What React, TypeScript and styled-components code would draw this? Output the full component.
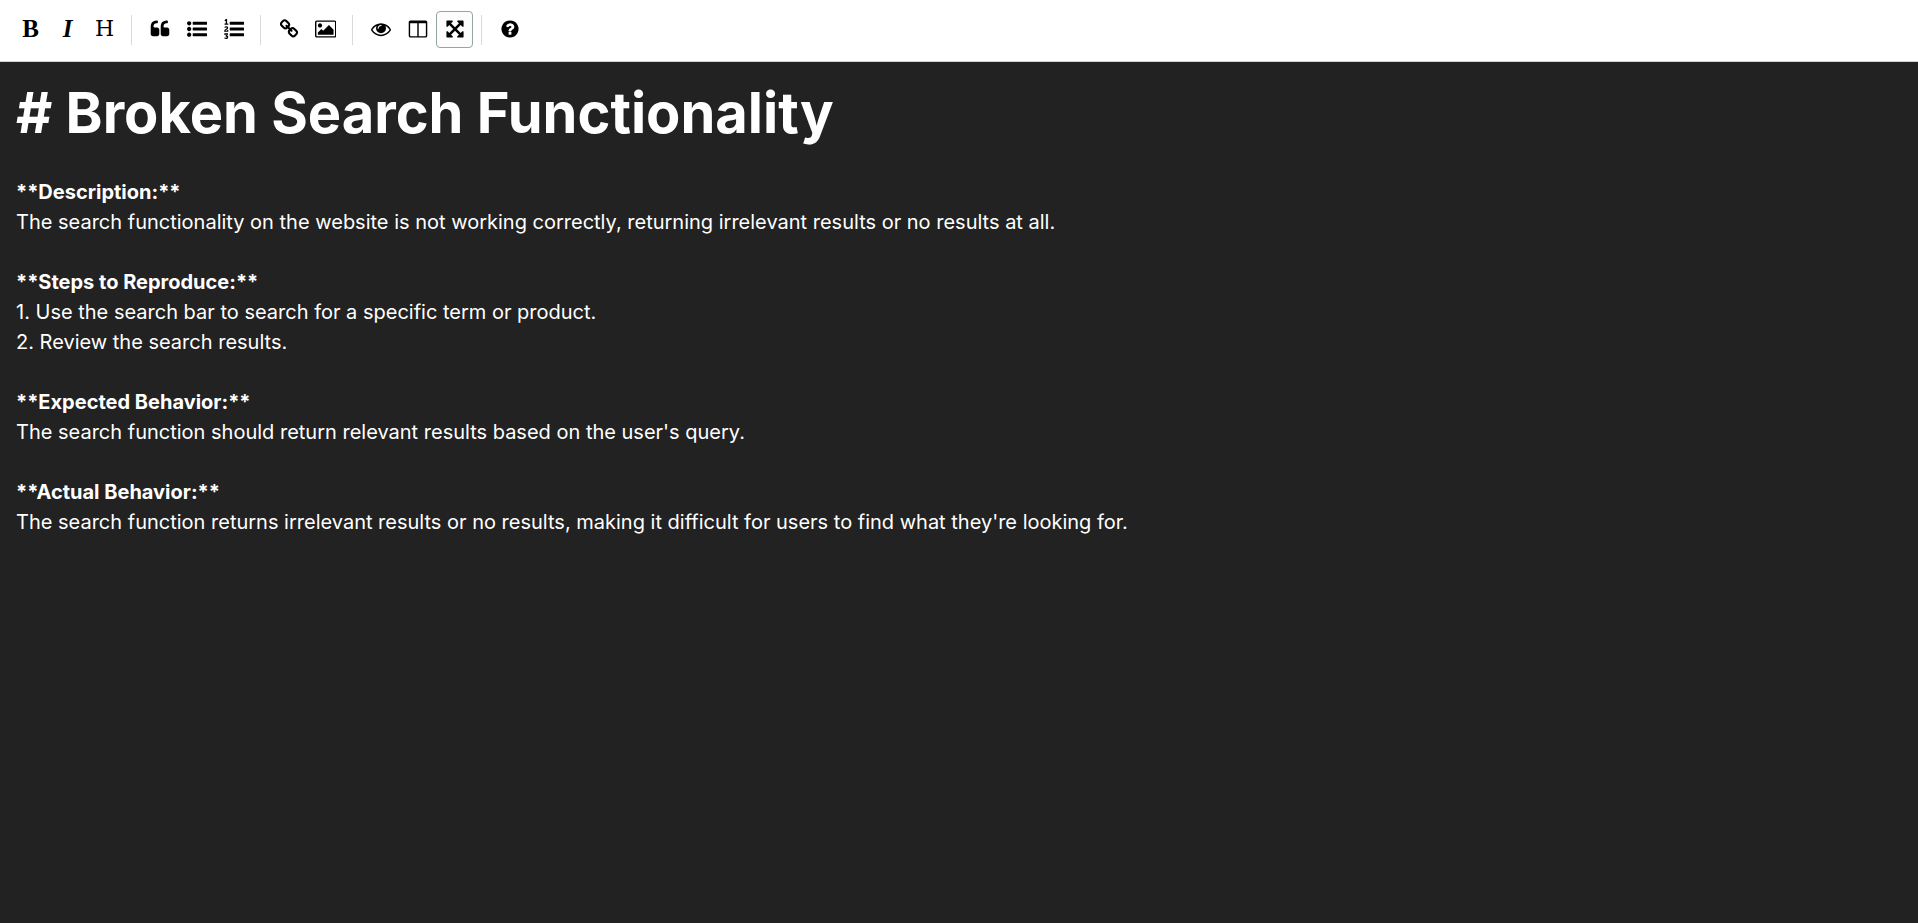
import React from "react";
import styled, { createGlobalStyle } from "styled-components";

const GlobalStyle = createGlobalStyle`
  * { box-sizing: border-box; }
  body { margin: 0; background: #222222; }
`;

const Page = styled.div`
  display: flex;
  flex-direction: column;
  min-height: 100vh;
  font-family: Inter, "Liberation Sans", sans-serif;
`;

const Toolbar = styled.div`
  display: flex;
  flex-wrap: wrap;
  align-items: center;
  padding: 11px 12px 13px;
  background: #ffffff;
  border-bottom: 1px solid #ced4da;
`;

const ToolButton = styled.button<{ $active?: boolean }>`
  display: flex;
  align-items: center;
  justify-content: center;
  width: 37px;
  height: 37px;
  padding: 0 0 2px;
  color: #000000;
  background: ${(p) => (p.$active ? "#fcfcfc" : "transparent")};
  border: 1px solid ${(p) => (p.$active ? "#95a5a6" : "transparent")};
  border-radius: 4px;
  cursor: pointer;

  &:hover {
    background: #fcfcfc;
    border-color: #95a5a6;
  }
`;

const Letter = styled.span<{ $family?: string; $size?: number; $weight?: number; $italic?: boolean }>`
  font-family: ${(p) => p.$family ?? "Liberation Serif"}, serif;
  font-size: ${(p) => p.$size ?? 25}px;
  line-height: 28px;
  font-weight: ${(p) => p.$weight ?? 400};
  font-style: ${(p) => (p.$italic ? "italic" : "normal")};
`;

const Separator = styled.span`
  width: 1px;
  height: 30px;
  margin: 0 9px 0 8px;
  background: #d9d9d9;
`;

const Icon = styled.svg`
  height: 20px;
  fill: currentColor;
`;

const Editor = styled.div`
  flex: 1;
  padding: 17px 16px;
  color: #ffffff;
  background: #222222;
  font-size: 20px;
  line-height: 30px;
  white-space: pre-wrap;
  outline: none;
`;

const Heading = styled.h1`
  margin: 0;
  font-size: 56px;
  line-height: 68px;
  font-weight: 700;
`;

const Line = styled.div`
  min-height: 30px;
`;

const Strong = styled.strong`
  font-weight: 700;
`;

const bars =
  "M1792 1312v192q0 13-9.5 22.5t-22.5 9.5h-1216q-13 0-22.5-9.5t-9.5-22.5v-192q0-13 9.5-22.5t22.5-9.5h1216q13 0 22.5 9.5t9.5 22.5zM1792 800v192q0 13-9.5 22.5t-22.5 9.5h-1216q-13 0-22.5-9.5t-9.5-22.5v-192q0-13 9.5-22.5t22.5-9.5h1216q13 0 22.5 9.5t9.5 22.5zM1792 288v192q0 13-9.5 22.5t-22.5 9.5h-1216q-13 0-22.5-9.5t-9.5-22.5v-192q0-13 9.5-22.5t22.5-9.5h1216q13 0 22.5 9.5t9.5 22.5z";

const icons = {
  quote:
    "M832 960v384q0 80-56 136t-136 56h-384q-80 0-136-56t-56-136v-704q0-104 40.5-198.5t109.5-163.5 163.5-109.5 198.5-40.5h64q26 0 45 19t19 45v128q0 26-19 45t-45 19h-64q-106 0-181 75t-75 181v32q0 40 28 68t68 28h224q80 0 136 56t56 136zm896 0v384q0 80-56 136t-136 56h-384q-80 0-136-56t-56-136v-704q0-104 40.5-198.5t109.5-163.5 163.5-109.5 198.5-40.5h64q26 0 45 19t19 45v128q0 26-19 45t-45 19h-64q-106 0-181 75t-75 181v32q0 40 28 68t68 28h224q80 0 136 56t56 136z",
  bullets:
    "M384 1408q0 80-56 136t-136 56-136-56-56-136 56-136 136-56 136 56 56 136zm0-512q0 80-56 136t-136 56-136-56-56-136 56-136 136-56 136 56 56 136zm0-512q0 80-56 136t-136 56-136-56-56-136 56-136 136-56 136 56 56 136z" +
    bars,
  numbers:
    "M381 1620q0 80-54.5 126t-135.5 46q-106 0-172-66l57-88q49 45 106 45 29 0 50.5-14.5t21.5-42.5q0-64-105-56l-26-56q8-10 32.5-43.5t42.5-54 37-38.5v-1q-16 0-48.5 1t-48.5 1v53h-106v-152h333v88l-95 115q51 12 81 49t30 88zm2-627v159h-362q-6-36-6-54 0-51 23.5-93t56.5-68 66-47.5 56.5-43.5 23.5-45q0-25-14.5-38.5t-39.5-13.5q-46 0-81 58l-85-59q24-51 71.5-79.5t105.5-28.5q73 0 123 41.5t50 112.5q0 50-34 91.5t-75 64.5-75.5 50.5-35.5 52.5h127v-60h105zM384 413v99h-335v-99h107q0-41 .5-121.5t.5-121.5v-12h-2q-8 17-50 54l-71-76 136-127h106v404h108z" +
    bars,
  link: "M1520 1216q0-40-28-68l-208-208q-28-28-68-28-42 0-72 32 3 3 19 18.5t21.5 21.5 15 19 13 25.5 3.5 27.5q0 40-28 68t-68 28q-15 0-27.5-3.5t-25.5-13-19-15-21.5-21.5-18.5-19q-33 31-33 73 0 40 28 68l206 207q27 27 68 27 40 0 68-26l147-146q28-28 28-67zm-703-705q0-40-28-68l-206-207q-28-28-68-28-39 0-68 27l-147 146q-28 28-28 67 0 40 28 68l208 208q27 27 68 27 42 0 72-31-3-3-19-18.5t-21.5-21.5-15-19-13-25.5-3.5-27.5q0-40 28-68t68-28q15 0 27.5 3.5t25.5 13 19 15 21.5 21.5 18.5 19q33-31 33-73zm895 705q0 120-85 203l-147 146q-83 83-203 83-121 0-204-85l-206-207q-83-83-83-203 0-123 88-209l-88-88q-86 88-208 88-120 0-204-84l-208-208q-84-84-84-204t85-203l147-146q83-83 203-83 121 0 204 85l206 207q83 83 83 203 0 123-88 209l88 88q86-88 208-88 120 0 204 84l208 208q84 84 84 204z",
  image:
    "M576 576q0 80-56 136t-136 56-136-56-56-136 56-136 136-56 136 56 56 136zm1024 384v448h-1408v-192l320-320 160 160 512-512zm96-704h-1600q-13 0-22.5 9.5t-9.5 22.5v1216q0 13 9.5 22.5t22.5 9.5h1600q13 0 22.5-9.5t9.5-22.5v-1216q0-13-9.5-22.5t-22.5-9.5zm160 32v1216q0 66-47 113t-113 47h-1600q-66 0-113-47t-47-113v-1216q0-66 47-113t113-47h1600q66 0 113 47t47 113z",
  eye: "M1664 960q-152-236-381-353 61 104 61 225 0 185-131.5 316.5t-316.5 131.5-316.5-131.5-131.5-316.5q0-121 61-225-229 117-381 353 133 205 333.5 326.5t434.5 121.5 434.5-121.5 333.5-326.5zm-720-384q0-20-14-34t-34-14q-125 0-214.5 89.5t-89.5 214.5q0 20 14 34t34 14 34-14 14-34q0-86 61-147t147-61q20 0 34-14t14-34zm848 384q0 34-20 69-140 230-376.5 368.5t-499.5 138.5-499.5-139-376.5-368q-20-35-20-69t20-69q140-229 376.5-368t499.5-139 499.5 139 376.5 368q20 35 20 69z",
  columns:
    "M224 1536h608v-1152h-640v1120q0 13 9.5 22.5t22.5 9.5zm1376-32v-1120h-640v1152h608q13 0 22.5-9.5t9.5-22.5zm128-1216v1216q0 66-47 113t-113 47h-1344q-66 0-113-47t-47-113v-1216q0-66 47-113t113-47h1344q66 0 113 47t47 113z",
  arrows:
    "M1411 541l-355 355 355 355 144-144q29-31 70-14 39 17 39 59v448q0 26-19 45t-45 19h-448q-42 0-59-40-17-39 14-69l144-144-355-355-355 355 144 144q31 30 14 69-17 40-59 40h-448q-26 0-45-19t-19-45v-448q0-42 40-59 39-17 69 14l144 144 355-355-355-355-144 144q-19 19-45 19-12 0-24-5-40-17-40-59v-448q0-26 19-45t45-19h448q42 0 59 40 17 39-14 69l-144 144 355 355 355-355-144-144q-31-30-14-69 17-40 59-40h448q26 0 45 19t19 45v448q0 42-39 59-13 5-25 5-26 0-45-19z",
  help: "M1024 1376v-192q0-14-9-23t-23-9h-192q-14 0-23 9t-9 23v192q0 14 9 23t23 9h192q14 0 23-9t9-23zm256-672q0-88-55.5-163t-138.5-116-170-41q-243 0-371 213-15 24 8 42l132 100q7 6 19 6 16 0 25-12 53-68 86-92 34-24 86-24 48 0 85.5 26t37.5 59q0 38-20 61t-68 45q-63 28-115.5 86.5t-52.5 125.5v36q0 14 9 23t23 9h192q14 0 23-9t9-23q0-19 21.5-49.5t54.5-49.5q32-18 49-28.5t46-35 44.5-48 28-60.5 12.5-81zm384 192q0 209-103 385.5t-279.5 279.5-385.5 103-385.5-103-279.5-279.5-103-385.5 103-385.5 279.5-279.5 385.5-103 385.5 103 279.5 279.5 103 385.5z",
};

type IconName = keyof typeof icons;

function IconButton({ name, label, active }: { name: IconName; label: string; active?: boolean }) {
  // The picture glyph is wider than the square the others share.
  const viewBox = name === "image" ? "-64 0 1920 1792" : "0 0 1792 1792";
  return (
    <ToolButton type="button" title={label} aria-label={label} $active={active} aria-pressed={active}>
      <Icon viewBox={viewBox} aria-hidden="true">
        <path d={icons[name]} />
      </Icon>
    </ToolButton>
  );
}

const lines: { text: string; bold?: boolean }[] = [
  { text: "" },
  { text: "**Description:**", bold: true },
  { text: "The search functionality on the website is not working correctly, returning irrelevant results or no results at all." },
  { text: "" },
  { text: "**Steps to Reproduce:**", bold: true },
  { text: "1. Use the search bar to search for a specific term or product." },
  { text: "2. Review the search results." },
  { text: "" },
  { text: "**Expected Behavior:**", bold: true },
  { text: "The search function should return relevant results based on the user's query." },
  { text: "" },
  { text: "**Actual Behavior:**", bold: true },
  { text: "The search function returns irrelevant results or no results, making it difficult for users to find what they're looking for." },
];

export default function App() {
  return (
    <Page>
      <GlobalStyle />
      <Toolbar role="toolbar" aria-label="Formatting">
        <ToolButton type="button" title="Bold" aria-label="Bold">
          <Letter $weight={700}>B</Letter>
        </ToolButton>
        <ToolButton type="button" title="Italic" aria-label="Italic">
          <Letter $weight={700} $italic>I</Letter>
        </ToolButton>
        <ToolButton type="button" title="Heading" aria-label="Heading">
          <Letter $family="DejaVu Serif" $size={22}>H</Letter>
        </ToolButton>
        <Separator />
        <IconButton name="quote" label="Quote" />
        <IconButton name="bullets" label="Generic List" />
        <IconButton name="numbers" label="Numbered List" />
        <Separator />
        <IconButton name="link" label="Create Link" />
        <IconButton name="image" label="Insert Image" />
        <Separator />
        <IconButton name="eye" label="Toggle Preview" />
        <IconButton name="columns" label="Toggle Side by Side" />
        <IconButton name="arrows" label="Toggle Fullscreen" active />
        <Separator />
        <IconButton name="help" label="Markdown Guide" />
      </Toolbar>
      <Editor
        role="textbox"
        aria-multiline="true"
        aria-label="Issue description"
        contentEditable
        suppressContentEditableWarning
        spellCheck={false}
      >
        <Heading># Broken Search Functionality</Heading>
        {lines.map((line, i) => (
          <Line key={i}>{line.bold ? <Strong>{line.text}</Strong> : line.text}</Line>
        ))}
      </Editor>
    </Page>
  );
}
